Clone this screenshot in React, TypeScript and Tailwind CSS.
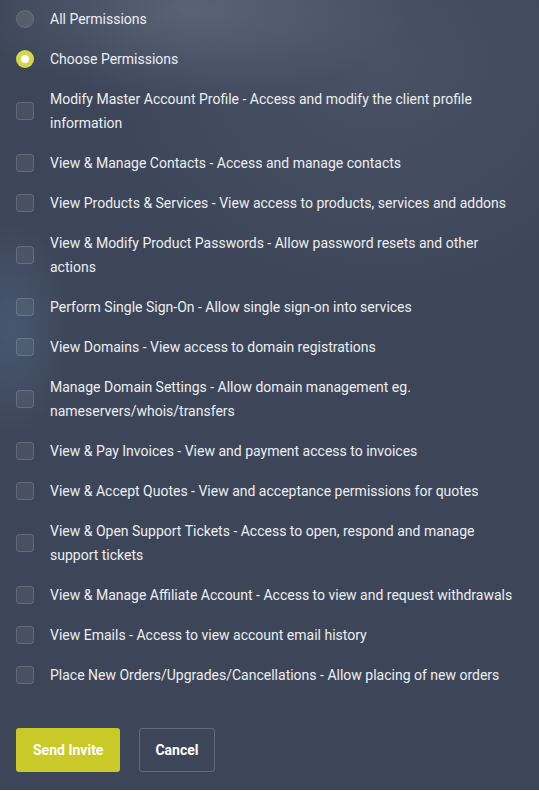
import React, { useState } from 'react';

const permissions: string[] = [
  'Modify Master Account Profile - Access and modify the client profile information',
  'View & Manage Contacts - Access and manage contacts',
  'View Products & Services - View access to products, services and addons',
  'View & Modify Product Passwords - Allow password resets and other actions',
  'Perform Single Sign-On - Allow single sign-on into services',
  'View Domains - View access to domain registrations',
  'Manage Domain Settings - Allow domain management eg. nameservers/whois/transfers',
  'View & Pay Invoices - View and payment access to invoices',
  'View & Accept Quotes - View and acceptance permissions for quotes',
  'View & Open Support Tickets - Access to open, respond and manage support tickets',
  'View & Manage Affiliate Account - Access to view and request withdrawals',
  'View Emails - Access to view account email history',
  'Place New Orders/Upgrades/Cancellations - Allow placing of new orders',
];

const App: React.FC = () => {
  const [mode, setMode] = useState<'all' | 'choose'>('choose');
  const [checked, setChecked] = useState<boolean[]>(permissions.map(() => false));

  const toggle = (i: number) => {
    setChecked((prev) => prev.map((v, j) => (j === i ? !v : v)));
  };

  return (
    <div className="min-h-[791px] w-full bg-[#3d4658] bg-[radial-gradient(ellipse_220px_90px_at_190px_10px,rgba(120,130,150,0.45),transparent),radial-gradient(ellipse_60px_110px_at_10px_330px,rgba(90,120,160,0.35),transparent),radial-gradient(ellipse_300px_260px_at_380px_60px,rgba(100,110,130,0.3),transparent)] font-['Roboto',sans-serif] text-[14px] text-[#eceef1]">
      <div className="flex flex-col px-4 -mt-px">
        <label className="flex items-center gap-4 py-2 leading-6 cursor-pointer" onClick={() => setMode('all')}>
          <span
            className={`w-[18px] h-[18px] shrink-0 rounded-full flex items-center justify-center ${
              mode === 'all' ? 'bg-[#d5d74a]' : 'bg-white/10 border border-white/10'
            }`}
          >
            {mode === 'all' && <span className="w-2 h-2 rounded-full bg-white" />}
          </span>
          <span>All Permissions</span>
        </label>
        <label className="flex items-center gap-4 py-2 leading-6 cursor-pointer" onClick={() => setMode('choose')}>
          <span
            className={`w-[18px] h-[18px] shrink-0 rounded-full flex items-center justify-center ${
              mode === 'choose' ? 'bg-[#d5d74a]' : 'bg-white/10 border border-white/10'
            }`}
          >
            {mode === 'choose' && <span className="w-2 h-2 rounded-full bg-white" />}
          </span>
          <span>Choose Permissions</span>
        </label>

        {permissions.map((p, i) => (
          <label key={p} className="flex items-center gap-4 py-2 leading-6 cursor-pointer" onClick={() => toggle(i)}>
            <span
              className={`w-[18px] h-[18px] shrink-0 rounded-[4px] border ${
                checked[i] ? 'bg-[#d5d74a] border-[#d5d74a]' : 'bg-white/[0.06] border-white/15'
              }`}
            />
            <span>{p}</span>
          </label>
        ))}

        <div className="flex gap-[19px] mt-[33px]">
          <button className="h-11 px-[17px] rounded-[3px] bg-[#c9c928] text-white font-bold text-[14px]">Send Invite</button>
          <button className="h-11 px-[15px] rounded-[3px] border border-white/20 text-white font-bold text-[14px]">
            Cancel
          </button>
        </div>
      </div>
    </div>
  );
};

export default App;
